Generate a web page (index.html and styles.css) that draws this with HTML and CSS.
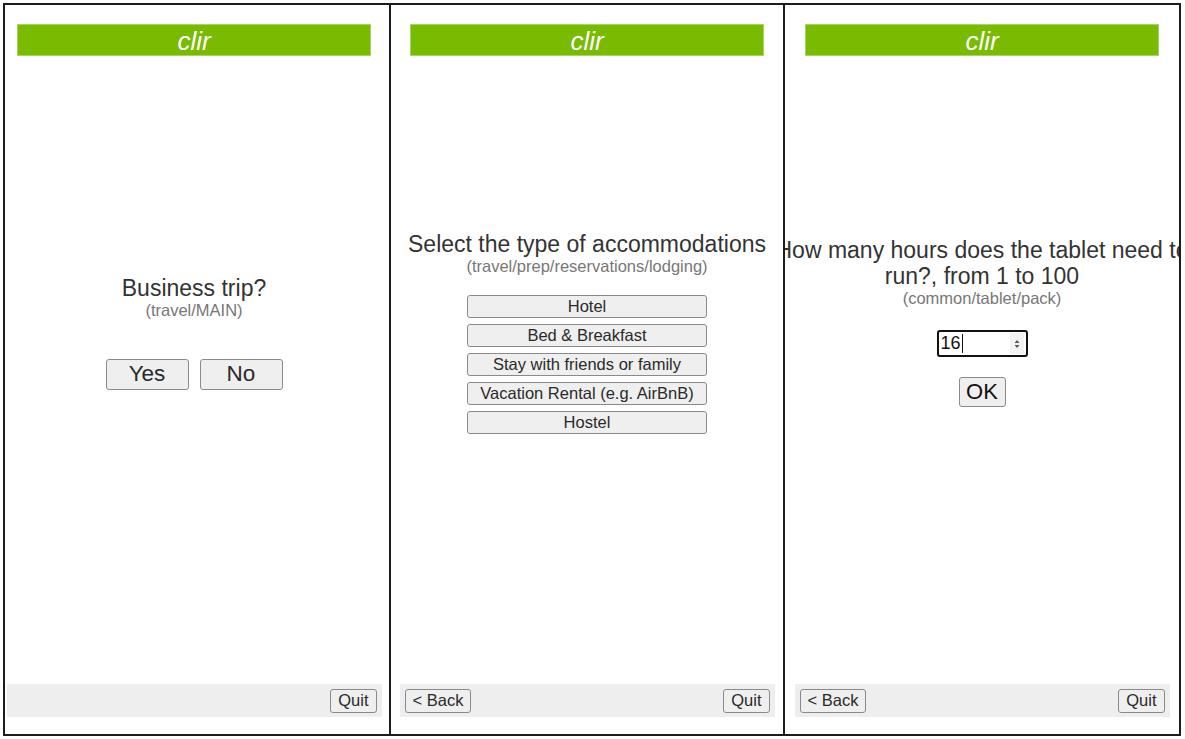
FILE: index.html
```html
<!DOCTYPE html>
<html lang="en">
<head>
  <meta charset="UTF-8">
  <title>clir screens</title>
  <link rel="stylesheet" href="styles.css">
</head>
<body>

<div class="frame">

  <section class="screen screen-first">
    <header class="brand">clir</header>
    <main class="body">
      <div class="prompt">Business trip?</div>
      <div class="path">(travel/MAIN)</div>
      <div class="choice-row">
        <button class="btn btn-big">Yes</button>
        <button class="btn btn-big">No</button>
      </div>
    </main>
    <footer class="bar">
      <button class="btn btn-small push-right">Quit</button>
    </footer>
  </section>

  <section class="screen screen-second">
    <header class="brand">clir</header>
    <main class="body">
      <div class="prompt">Select the type of accommodations</div>
      <div class="path">(travel/prep/reservations/lodging)</div>
      <div class="options">
        <button class="btn btn-option">Hotel</button>
        <button class="btn btn-option">Bed &amp; Breakfast</button>
        <button class="btn btn-option">Stay with friends or family</button>
        <button class="btn btn-option">Vacation Rental (e.g. AirBnB)</button>
        <button class="btn btn-option">Hostel</button>
      </div>
    </main>
    <footer class="bar">
      <button class="btn btn-small">&lt; Back</button>
      <button class="btn btn-small">Quit</button>
    </footer>
  </section>

  <section class="screen screen-third">
    <header class="brand">clir</header>
    <main class="body">
      <div class="prompt prompt-wide">How many hours does the tablet need to run?, from 1 to 100</div>
      <div class="path">(common/tablet/pack)</div>
      <div class="num-field">
        <span class="num-value">16</span>
        <span class="caret"></span>
        <span class="spin">
          <svg width="8" height="14" viewBox="0 0 8 14">
            <path d="M4 3 L6.5 6 H1.5 Z M4 11 L6.5 8 H1.5 Z" fill="#5a5a5a"/>
          </svg>
        </span>
      </div>
      <button class="btn btn-ok">OK</button>
    </main>
    <footer class="bar">
      <button class="btn btn-small">&lt; Back</button>
      <button class="btn btn-small">Quit</button>
    </footer>
  </section>

</div>

</body>
</html>
```

FILE: styles.css
```css
* {
  box-sizing: border-box;
}
body {
  margin: 0;
  font-family: "Liberation Sans", Arial, sans-serif;
  background-color: #fff;
  color: #333;
}
.frame {
  display: flex;
  width: 1178px;
  height: 733px;
  margin: 3px;
  border: 2px solid #1c1c1c;
}
.screen {
  display: flex;
  flex-direction: column;
  align-items: center;
  overflow: hidden;
  border-right: 2px solid #1c1c1c;
}
.screen-first {
  width: 386px;
  padding-right: 6px;
}
.screen-second {
  width: 394px;
}
.screen-third {
  flex: 1;
  border-right: none;
}
.brand {
  flex-shrink: 0;
  width: 354px;
  height: 32px;
  margin-top: 19px;
  background-color: #78bb00;
  border: 1px solid #a6d563;
  color: #fff;
  font-style: italic;
  font-size: 26px;
  line-height: 32px;
  text-align: center;
}
.body {
  flex: 1;
  width: 100%;
  display: flex;
  flex-direction: column;
  align-items: center;
  justify-content: center;
  padding-bottom: 76px;
}
.prompt {
  font-size: 23px;
  line-height: 26px;
  text-align: center;
  white-space: nowrap;
}
.prompt-wide {
  flex-shrink: 0;
  width: 420px;
  white-space: normal;
}
.path {
  font-size: 16.5px;
  line-height: 18px;
  color: #777;
}
.btn {
  font-family: "Liberation Sans", Arial, sans-serif;
  color: #2a2a2a;
  background-color: #efefef;
  border: 1px solid #8a8a8a;
  border-radius: 3px;
  padding: 0;
  cursor: pointer;
}
.choice-row {
  display: flex;
  gap: 11px;
  margin-top: 40px;
}
.btn-big {
  width: 83px;
  height: 31px;
  font-size: 22.5px;
}
.options {
  display: flex;
  flex-direction: column;
  gap: 6px;
  margin-top: 20px;
}
.btn-option {
  width: 240px;
  height: 23px;
  font-size: 16.5px;
}
.num-field {
  display: flex;
  align-items: center;
  width: 91px;
  height: 27px;
  margin-top: 23px;
  padding-left: 2px;
  border: 2px solid #111;
  border-radius: 3px;
  font-size: 18px;
  color: #111;
}
.caret {
  width: 1px;
  height: 19px;
  margin-left: 1px;
  background-color: #111;
}
.spin {
  display: flex;
  align-items: center;
  justify-content: center;
  width: 14px;
  height: 21px;
  margin-left: auto;
  margin-right: 2px;
  background-color: #f3f3f3;
}
.btn-ok {
  width: 47px;
  height: 30px;
  margin-top: 20px;
  margin-bottom: 20px;
  font-size: 22px;
  color: #111;
}
.bar {
  flex-shrink: 0;
  display: flex;
  align-items: center;
  justify-content: space-between;
  width: 375px;
  height: 33px;
  margin-bottom: 17px;
  padding: 0 5px;
  background-color: #eee;
}
.btn-small {
  height: 24px;
  padding: 0 7px;
  font-size: 16.5px;
}
.push-right {
  margin-left: auto;
}
```
